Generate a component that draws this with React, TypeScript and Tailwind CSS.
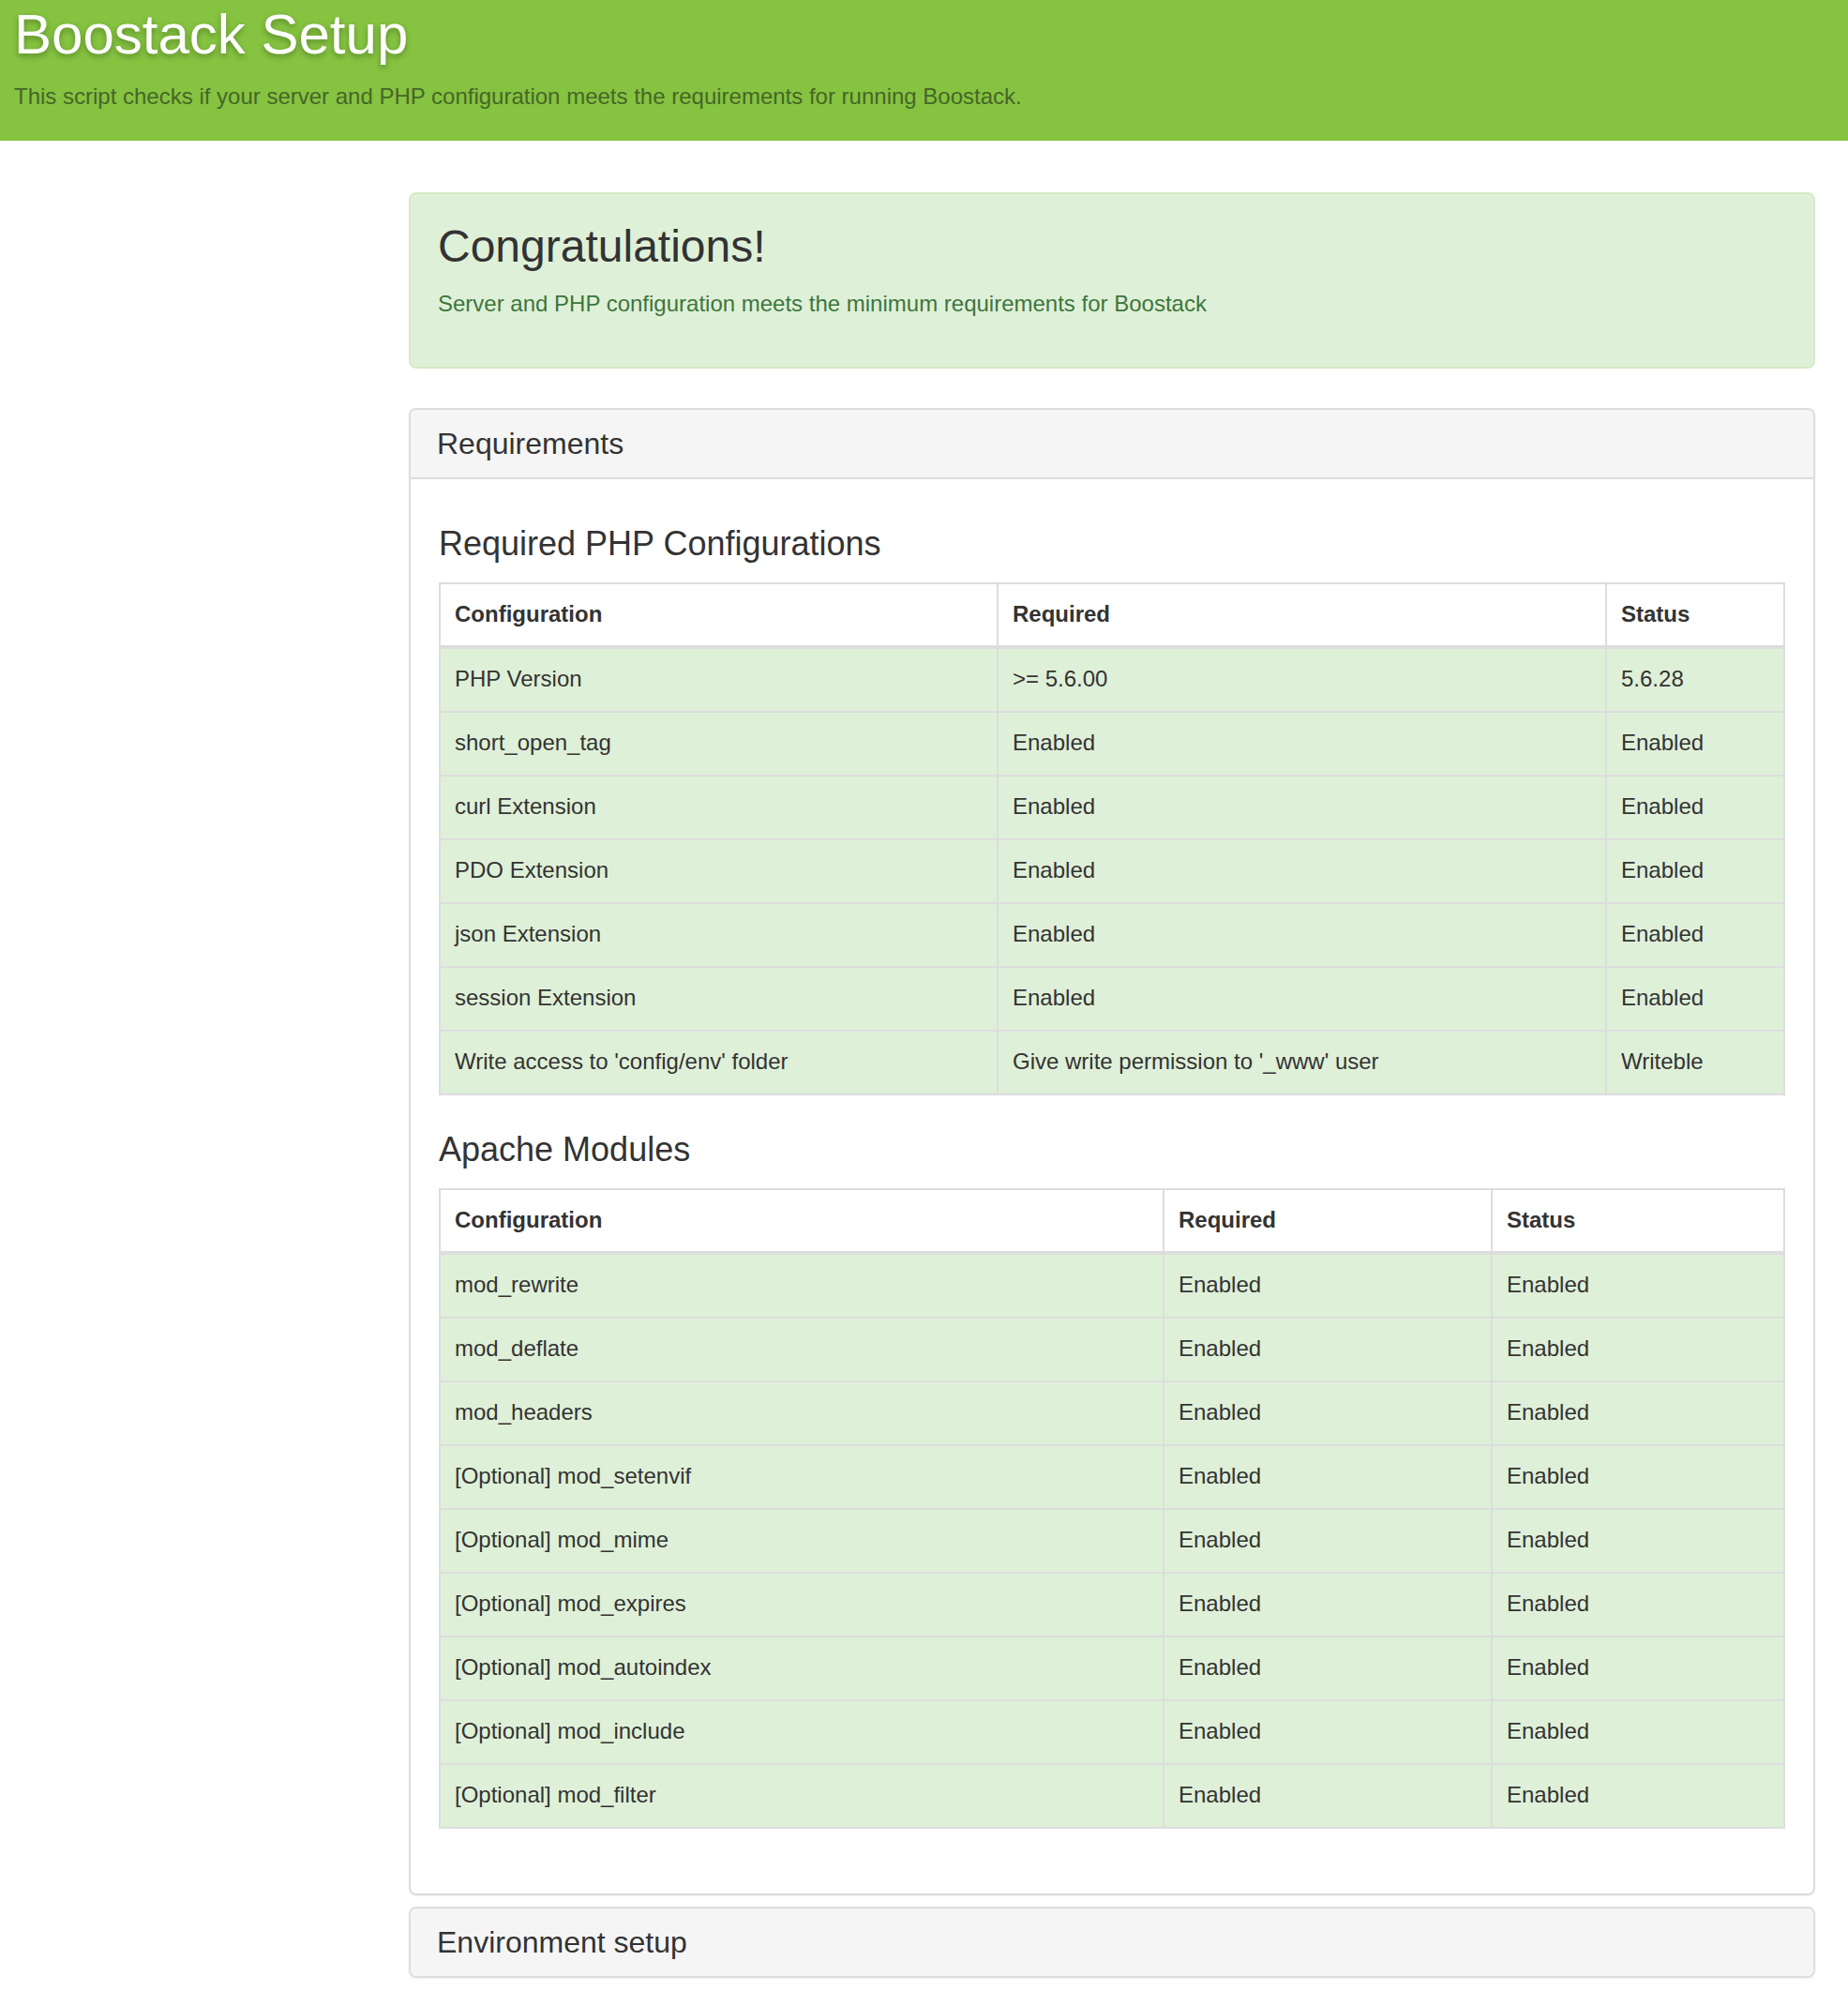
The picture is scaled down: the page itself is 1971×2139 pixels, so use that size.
const phpRows = [
  ["PHP Version", ">= 5.6.00", "5.6.28"],
  ["short_open_tag", "Enabled", "Enabled"],
  ["curl Extension", "Enabled", "Enabled"],
  ["PDO Extension", "Enabled", "Enabled"],
  ["json Extension", "Enabled", "Enabled"],
  ["session Extension", "Enabled", "Enabled"],
  ["Write access to 'config/env' folder", "Give write permission to '_www' user", "Writeble"],
];

const apacheRows = [
  ["mod_rewrite", "Enabled", "Enabled"],
  ["mod_deflate", "Enabled", "Enabled"],
  ["mod_headers", "Enabled", "Enabled"],
  ["[Optional] mod_setenvif", "Enabled", "Enabled"],
  ["[Optional] mod_mime", "Enabled", "Enabled"],
  ["[Optional] mod_expires", "Enabled", "Enabled"],
  ["[Optional] mod_autoindex", "Enabled", "Enabled"],
  ["[Optional] mod_include", "Enabled", "Enabled"],
  ["[Optional] mod_filter", "Enabled", "Enabled"],
];

const ReqTable = ({ rows, colA, colB }: { rows: string[][]; colA: string; colB: string }) => {
  return (
    <table className="w-full table-fixed border-collapse border-2 border-[#ddd] text-[24px] text-[#333]">
      <colgroup>
        <col className={colA} />
        <col className={colB} />
        <col />
      </colgroup>
      <thead>
        <tr>
          {["Configuration", "Required", "Status"].map((h) => (
            <th
              key={h}
              className="border-2 border-b-4 border-[#ddd] bg-white px-[15px] pt-[14px] pb-[16px] text-left font-bold leading-[35px]"
            >
              {h}
            </th>
          ))}
        </tr>
      </thead>
      <tbody>
        {rows.map((row, i) => (
          <tr key={i} className="bg-[#dff0d8]">
            {row.map((cell, j) => (
              <td key={j} className="border-2 border-[#ddd] px-[15px] pt-[14px] pb-[16px] leading-[36px]">
                {cell}
              </td>
            ))}
          </tr>
        ))}
      </tbody>
    </table>
  );
};

const PanelHeading = ({ title, last }: { title: string; last?: boolean }) => (
  <div
    className={
      last
        ? "flex h-[72px] items-center rounded-[7px] bg-[#f5f5f5] px-[28px]"
        : "flex h-[74px] items-center rounded-t-[7px] border-b-2 border-[#ddd] bg-[#f5f5f5] px-[28px]"
    }
  >
    <h3 className="text-[32px] leading-[36px] text-[#333]">{title}</h3>
  </div>
);

export default function App() {
  return (
    <div className="min-h-[2139px] bg-white font-['Liberation_Sans',Arial,sans-serif] text-[#333]">
      {/* Top banner */}
      <header className="h-[150px] bg-[#85c340] px-[15px] pt-[4px]">
        <h1 className="text-[60px] leading-[66px] text-white [text-shadow:0_3px_6px_rgba(0,0,0,0.3)]">
          Boostack Setup
        </h1>
        <p className="mt-[16px] text-[24px] leading-[34px] text-[#466628]">
          This script checks if your server and PHP configuration meets the requirements for running Boostack.
        </p>
      </header>

      <div className="flex pt-[55px] pr-[35px]">
        <div className="w-[436px] shrink-0" />

        <main className="flex flex-1 flex-col">
          {/* Success alert */}
          <div className="rounded-[8px] border-2 border-[#d6e9c6] bg-[#dff0d8] px-[29px] pt-[29px] pb-[50px]">
            <h2 className="text-[48px] leading-[53px] text-[#333]">Congratulations!</h2>
            <p className="mt-[18px] text-[24px] leading-[34px] text-[#3c763d]">
              Server and PHP configuration meets the minimum requirements for Boostack
            </p>
          </div>

          {/* Requirements panel */}
          <section className="mt-[42px] rounded-[8px] border-2 border-[#ddd] bg-white shadow-[0_1px_2px_rgba(0,0,0,0.06)]">
            <PanelHeading title="Requirements" />
            <div className="px-[30px] pt-[49px] pb-[69px]">
              <h3 className="mb-[21px] text-[36px] leading-[40px] text-[#333]">Required PHP Configurations</h3>
              <ReqTable rows={phpRows} colA="w-[595px]" colB="w-[649px]" />

              <h3 className="mt-[38px] mb-[21px] text-[36px] leading-[40px] text-[#333]">Apache Modules</h3>
              <ReqTable rows={apacheRows} colA="w-[772px]" colB="w-[350px]" />
            </div>
          </section>

          {/* Environment panel (collapsed) */}
          <section className="mt-[12px] rounded-[8px] border-2 border-[#ddd] bg-white shadow-[0_1px_2px_rgba(0,0,0,0.06)]">
            <PanelHeading title="Environment setup" last />
          </section>
        </main>
      </div>
    </div>
  );
}
